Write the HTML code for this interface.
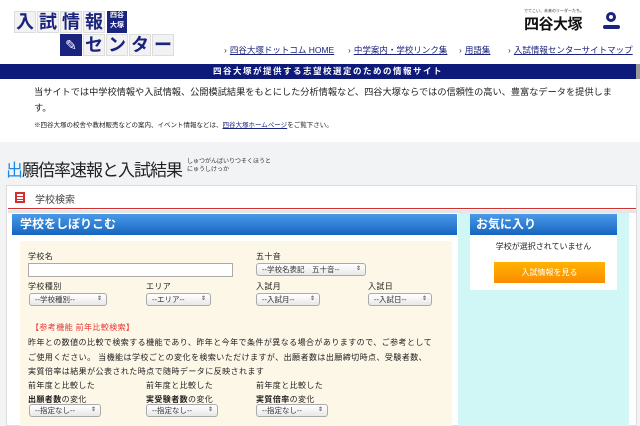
<!DOCTYPE html>
<html><head><meta charset="utf-8"><style>
*{margin:0;padding:0;box-sizing:border-box}
body{width:640px;height:426px;overflow:hidden;background:#f1f3f4;font-family:"Liberation Sans","Noto Sans CJK JP",sans-serif;color:#222;position:relative}
.a{position:absolute}
.top{position:absolute;left:0;top:0;width:640px;height:142px;background:#fff}
.lb{position:absolute;width:22px;height:22px;background:#f2f2f2;border:1px solid #ddd;font-size:18px;font-weight:bold;color:#1a237e;text-align:center;line-height:21px}
.nav{font-size:8.5px;color:#1a237e;text-decoration:underline;position:absolute;top:44px}
.nav:before{content:"› ";text-decoration:none;display:inline-block;margin-right:3px;color:#333}
.sel{position:absolute;height:13px;border:1px solid #aaa;border-radius:3px;background:linear-gradient(#fff,#e8e8e8);font-size:7.5px;line-height:11px;padding-left:5px;color:#333}
.sel:after{content:"⇕";position:absolute;right:4px;font-size:6px}
.lbl{position:absolute;font-size:8px;color:#222;letter-spacing:0.4px}
</style></head><body>
<div class="top"></div>
<div class="lb" style="left:14px;top:11px">入</div>
<div class="lb" style="left:37px;top:11px">試</div>
<div class="lb" style="left:60px;top:11px">情</div>
<div class="lb" style="left:83px;top:11px">報</div>
<div class="a" style="left:107px;top:11px;width:20px;height:22px;background:#1a237e;color:#fff;font-size:7px;line-height:10px;text-align:center;font-weight:bold">四谷<br>大塚</div>
<div class="a" style="left:60px;top:34px;width:22px;height:22px;background:#1a237e;color:#fff;font-size:14px;text-align:center;line-height:22px">✎</div>
<div class="lb" style="left:83px;top:34px">セ</div>
<div class="lb" style="left:106px;top:34px">ン</div>
<div class="lb" style="left:129px;top:34px">タ</div>
<div class="lb" style="left:152px;top:34px">ー</div>
<div class="a" style="left:524px;top:8px;font-size:4px;color:#333">でてこい、未来のリーダーたち。</div>
<div class="a" style="left:524px;top:13px;font-size:15px;font-weight:bold;color:#111;letter-spacing:-0.5px">四谷大塚</div>
<div class="a" style="left:606px;top:12px;width:10px;height:10px;border:3px solid #1a237e;border-radius:50%"></div>
<div class="a" style="left:603px;top:25px;width:17px;height:4px;background:#1a237e;border-radius:2px"></div>
<span class="nav" style="left:224px">四谷大塚ドットコム HOME</span>
<span class="nav" style="left:348px">中学案内・学校リンク集</span>
<span class="nav" style="left:459px">用語集</span>
<span class="nav" style="left:508px">入試情報センターサイトマップ</span>
<div class="a" style="left:0;top:64px;width:636px;height:15px;background:#0d1a7a;color:#fff;font-size:8.5px;font-weight:bold;text-align:center;line-height:15px;letter-spacing:1.5px;padding-left:20px">四谷大塚が提供する志望校選定のための情報サイト</div>
<div class="a" style="left:636px;top:64px;width:4px;height:15px;background:#999"></div>
<div class="a" style="left:34px;top:84px;font-size:9.2px;line-height:16px;letter-spacing:0px;white-space:nowrap">当サイトでは中学校情報や入試情報、公開模試結果をもとにした分析情報など、四谷大塚ならではの信頼性の高い、豊富なデータを提供しま<br>す。</div>
<div class="a" style="left:34px;top:119px;font-size:6.5px">※四谷大塚の校舎や教材販売などの案内、イベント情報などは、<span style="color:#1a237e;text-decoration:underline">四谷大塚ホームページ</span>をご覧下さい。</div>
<div class="a" style="left:6px;top:156px;font-size:17px;color:#222;letter-spacing:-1px"><span style="color:#1e88e5">出</span>願倍率速報と入試結果</div>
<div class="a" style="left:187px;top:158px;font-size:6px;line-height:8px;color:#333">しゅつがんばいりつそくほうと<br>にゅうしけっか</div>
<div class="a" style="left:6px;top:185px;width:631px;height:241px;background:#fff;border:1px solid #ddd"></div>
<div class="a" style="left:15px;top:192px;width:10px;height:11px;border:2px solid #d32f2f;background:repeating-linear-gradient(#fff 0 2px,#d32f2f 2px 3px)"></div>
<div class="a" style="left:35px;top:191px;font-size:10px;color:#444">学校検索</div>
<div class="a" style="left:8px;top:208px;width:628px;height:1px;background:#d32f2f"></div>
<div class="a" style="left:8px;top:210px;width:628px;height:3px;background:#e6e6e6"></div>
<div class="a" style="left:12px;top:214px;width:445px;height:21px;background:linear-gradient(#4a9ae8,#1565c0);color:#fff;font-size:12px;font-weight:bold;line-height:21px;padding-left:8px">学校をしぼりこむ</div>
<div class="a" style="left:20px;top:241px;width:432px;height:185px;background:#fdf7e8"></div>
<div class="a" style="left:458px;top:213px;width:171px;height:213px;background:#d1f6f6"></div>
<div class="a" style="left:470px;top:214px;width:147px;height:21px;background:linear-gradient(#4a9ae8,#1565c0);color:#fff;font-size:12px;font-weight:bold;line-height:21px;padding-left:6px">お気に入り</div>
<div class="a" style="left:470px;top:235px;width:147px;height:55px;background:#fff"></div>
<div class="a" style="left:470px;top:241px;width:147px;text-align:center;font-size:8px">学校が選択されていません</div>
<div class="a" style="left:494px;top:262px;width:111px;height:21px;background:linear-gradient(#ffb300,#fb8c00);color:#fff;font-size:8px;text-align:center;line-height:21px">入試情報を見る</div>
<div class="lbl" style="left:28px;top:251px">学校名</div>
<div class="a" style="left:28px;top:263px;width:205px;height:14px;border:1px solid #aaa;background:#fff"></div>
<div class="lbl" style="left:256px;top:251px">五十音</div>
<div class="sel" style="left:256px;top:263px;width:110px">--学校名表記　五十音--</div>
<div class="lbl" style="left:28px;top:281px">学校種別</div>
<div class="lbl" style="left:146px;top:281px">エリア</div>
<div class="lbl" style="left:256px;top:281px">入試月</div>
<div class="lbl" style="left:368px;top:281px">入試日</div>
<div class="sel" style="left:29px;top:293px;width:78px">--学校種別--</div>
<div class="sel" style="left:146px;top:293px;width:65px">--エリア--</div>
<div class="sel" style="left:256px;top:293px;width:64px">--入試月--</div>
<div class="sel" style="left:368px;top:293px;width:64px">--入試日--</div>
<div class="lbl" style="left:31px;top:322px;color:#e53935">【参考機能 前年比較検索】</div>
<div class="a" style="left:28px;top:336px;width:412px;font-size:8px;line-height:14.5px;letter-spacing:0.44px">昨年との数値の比較で検索する機能であり、昨年と今年で条件が異なる場合がありますので、ご参考としてご使用ください。 当機能は学校ごとの変化を検索いただけますが、出願者数は出願締切時点、受験者数、<br>実質倍率は結果が公表された時点で随時データに反映されます</div>
<div class="lbl" style="left:28px;top:379px;line-height:13.5px">前年度と比較した<br><b>出願者数</b>の変化</div>
<div class="lbl" style="left:146px;top:379px;line-height:13.5px">前年度と比較した<br><b>実受験者数</b>の変化</div>
<div class="lbl" style="left:256px;top:379px;line-height:13.5px">前年度と比較した<br><b>実質倍率</b>の変化</div>
<div class="sel" style="left:29px;top:404px;width:72px">--指定なし--</div>
<div class="sel" style="left:146px;top:404px;width:72px">--指定なし--</div>
<div class="sel" style="left:256px;top:404px;width:72px">--指定なし--</div>
</body></html>
